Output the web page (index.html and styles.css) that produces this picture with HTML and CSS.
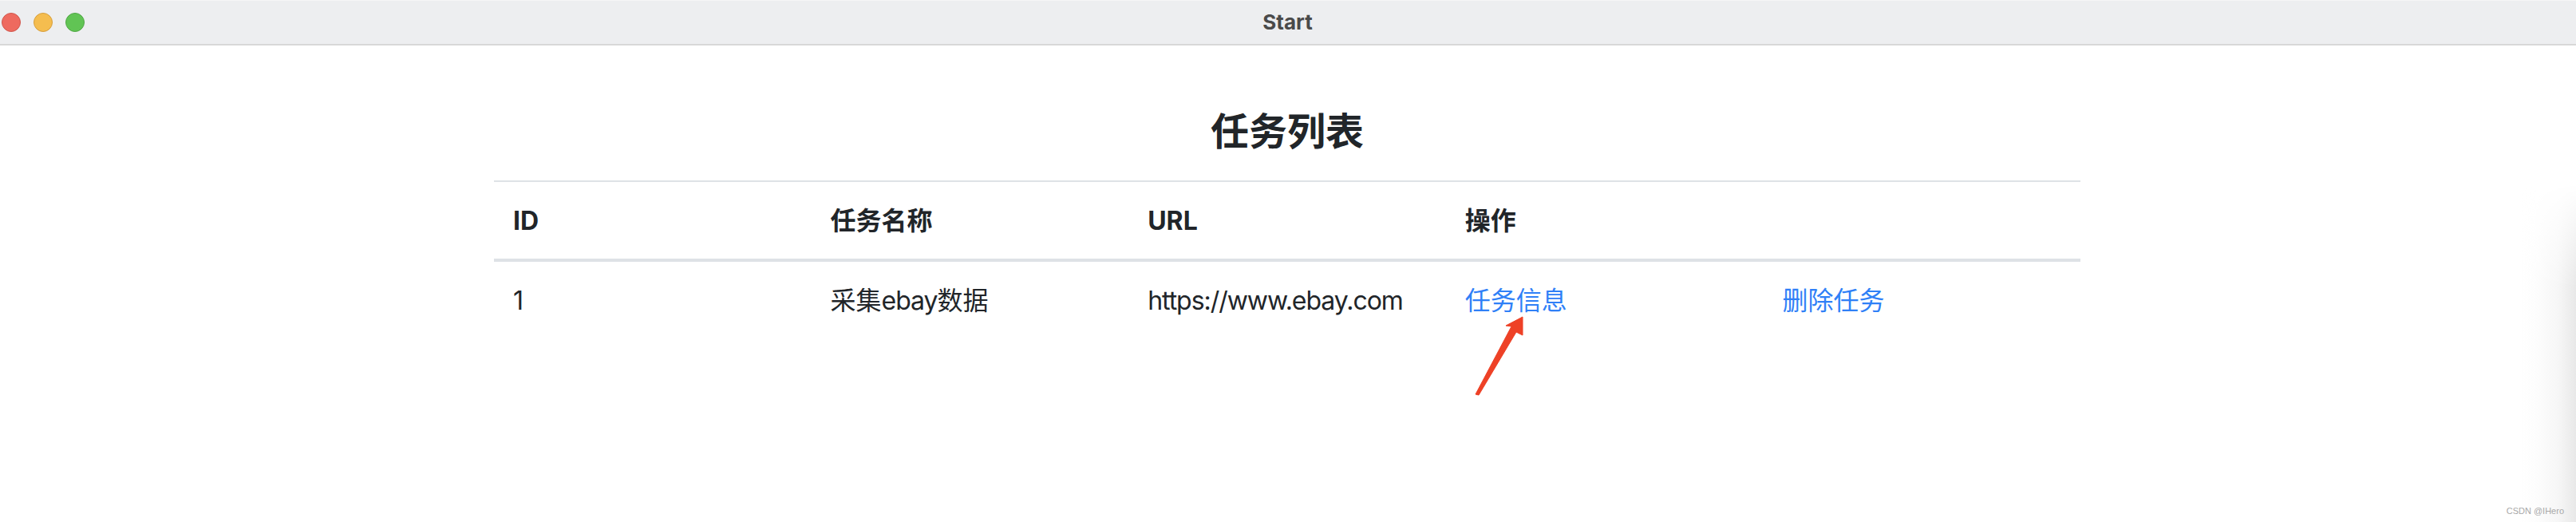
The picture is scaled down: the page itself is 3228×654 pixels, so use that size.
FILE: index.html
```html
<!DOCTYPE html>
<html lang="zh-CN">
<head>
<meta charset="utf-8">
<title>Start</title>
<link rel="stylesheet" href="styles.css">
</head>
<body>
<div class="window">
  <header class="titlebar">
    <div class="lights">
      <span class="light red"></span>
      <span class="light yellow"></span>
      <span class="light green"></span>
    </div>
    <div class="wintitle">Start</div>
  </header>
  <main class="content">
    <h1 class="heading">任务列表</h1>
    <table class="tasks">
      <thead>
        <tr><th>ID</th><th>任务名称</th><th>URL</th><th>操作</th><th></th></tr>
      </thead>
      <tbody>
        <tr>
          <td>1</td>
          <td>采集<span class="latin">ebay</span>数据</td>
          <td><span class="latin">https://www.ebay.com</span></td>
          <td><a href="#">任务信息</a></td>
          <td><a href="#">删除任务</a></td>
        </tr>
      </tbody>
    </table>
  </main>
  <div class="edge-shadow"></div>
  <svg class="arrow" width="70" height="115" viewBox="0 0 70 115" aria-hidden="true">
    <path d="M3 110 L7 111 L54 32 L62 36 L62 13 L41 24 L48 25 Z" fill="#ee4126" stroke="#ee4126" stroke-width="1" stroke-linejoin="round"/>
  </svg>
  <div class="mark">CSDN @IHero</div>
</div>
</body>
</html>
```
FILE: styles.css
```css
* { box-sizing: border-box; }
html, body { margin: 0; padding: 0; height: 100%; background: #fff; }
body { font-family: Inter, "Noto Sans CJK SC", sans-serif; color: #212529; overflow: hidden; }
.window { position: relative; height: 654px; overflow: hidden; }
.titlebar {
  position: relative;
  height: 57px;
  background: #edeef0;
  border-top: 1px solid #f6f6f6;
  border-bottom: 2px solid #d8d8d8;
  display: flex;
  align-items: center;
  justify-content: center;
}
.lights { position: absolute; left: 2px; top: 15px; display: flex; gap: 16px; }
.light { width: 24px; height: 24px; border-radius: 50%; border: 1px solid; }
.red { background: #ee6a5f; border-color: #d0574d; }
.yellow { background: #f5bd4f; border-color: #d69e3c; }
.green { background: #61c454; border-color: #50a745; }
.wintitle { font-size: 26px; font-weight: 700; color: #4a4a4a; line-height: 1; padding-right: 1px; }
.content { padding: 79px 621px 0 619px; }
.heading {
  margin: 0 0 32px;
  text-align: center;
  font-size: 48px;
  line-height: 58px;
  font-weight: 700;
}
.tasks { width: 100%; border-collapse: collapse; table-layout: fixed; border-top: 2px solid #dee2e6; font-size: 32px; line-height: 48px; }
.tasks th, .tasks td { padding: 25px 24px 23px; text-align: left; }
.tasks th { font-weight: 700; border-bottom: 4px solid #dee2e6; }
.tasks td { font-weight: 400; white-space: nowrap; }
.tasks a { color: #2f80f7; text-decoration: none; }
.latin { letter-spacing: -1.05px; }
.edge-shadow {
  position: absolute;
  right: 0;
  top: 230px;
  bottom: 0;
  width: 70px;
  background: linear-gradient(to left, #e8e8e8 0, #ececec 6px, #f6f6f6 22px, #fdfdfd 50px, rgba(255, 255, 255, 0) 70px);
  -webkit-mask-image: linear-gradient(to bottom, transparent 0, #000 130px);
  mask-image: linear-gradient(to bottom, transparent 0, #000 130px);
}
.arrow { position: absolute; left: 1846px; top: 384px; }
.mark { position: absolute; right: 15px; bottom: 7px; font-size: 11px; line-height: 14px; color: #a8a8a8; font-family: "Liberation Sans", sans-serif; }
```
